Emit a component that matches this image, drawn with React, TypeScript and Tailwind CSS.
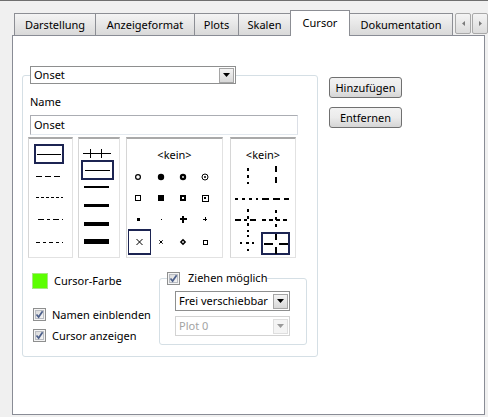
import React from "react";

const NAVY = "#1c2452";

function CheckBox() {
  return (
    <svg width="13" height="13" viewBox="0 0 13 13" className="shrink-0">
      <defs>
        <linearGradient id="cbg" x1="0" y1="0" x2="1" y2="1">
          <stop offset="0" stopColor="#d9d9d9" />
          <stop offset="1" stopColor="#f6f6f6" />
        </linearGradient>
      </defs>
      <rect x="0.5" y="0.5" width="12" height="12" fill="#f4f4f4" stroke="#8e8f8f" />
      <rect x="2.5" y="2.5" width="8" height="8" fill="url(#cbg)" stroke="#b9bcc2" />
      <path d="M3.5 6.5 L5.6 9 L9.6 3.2" fill="none" stroke="#4c5f8a" strokeWidth="1.7" />
    </svg>
  );
}

function Arrow({ disabled }: { disabled?: boolean }) {
  return (
    <svg width="7" height="4" viewBox="0 0 7 4">
      <path d="M0 0 H7 L3.5 4 Z" fill={disabled ? "#9a9a9a" : "#000"} />
    </svg>
  );
}

function Combo({ value, className, disabled }: { value: string; className: string; disabled?: boolean }) {
  return (
    <div
      className={`flex items-center bg-white pl-[3px] pr-[1px] border ${
        disabled ? "border-[#d3d3d3] text-[#a3a3a3]" : "border-[#8e8f8f] text-black"
      } ${className}`}
    >
      <span className="flex-1 whitespace-nowrap leading-[16px]">{value}</span>
      <div
        className={`flex h-[15px] w-[15px] shrink-0 items-center justify-center border ${
          disabled ? "border-[#dedede] bg-[#f4f4f4]" : "border-[#a5a5a5] bg-linear-to-b from-[#f4f4f4] to-[#d8d8d8]"
        }`}
      >
        <Arrow disabled={disabled} />
      </div>
    </div>
  );
}

function ListBox({ className, children }: { className: string; children: React.ReactNode }) {
  return (
    <div
      className={`flex flex-col bg-white border border-[#e2e2e2] border-l-[#d6d6d6] border-t-2 border-t-[#a9a9a9] ${className}`}
    >
      {children}
    </div>
  );
}

function LineStyles() {
  return (
    <svg width="43" height="118" viewBox="0 0 43 118" shapeRendering="crispEdges">
      <rect x="6" y="6" width="28" height="18" fill="none" stroke={NAVY} strokeWidth="1.6" />
      <line x1="8" y1="15.5" x2="32" y2="15.5" stroke="#000" />
      <line x1="7" y1="37.5" x2="34" y2="37.5" stroke="#000" strokeDasharray="6 3" />
      <line x1="7" y1="58.5" x2="34" y2="58.5" stroke="#000" strokeDasharray="3 2" />
      <line x1="9" y1="80.5" x2="34" y2="80.5" stroke="#000" strokeDasharray="6 3 3 3" />
      <line x1="7" y1="103.5" x2="34" y2="103.5" stroke="#000" strokeDasharray="4 3 3 3" />
    </svg>
  );
}

function LineWidths() {
  return (
    <svg width="40" height="118" viewBox="0 0 40 118" shapeRendering="crispEdges">
      <line x1="4" y1="14.5" x2="32" y2="14.5" stroke="#000" />
      <line x1="11.5" y1="10" x2="11.5" y2="19" stroke="#000" />
      <line x1="22.5" y1="10" x2="22.5" y2="19" stroke="#000" />
      <rect x="3" y="22" width="31" height="18" fill="none" stroke={NAVY} strokeWidth="1.6" />
      <line x1="6" y1="31.5" x2="31" y2="31.5" stroke="#000" />
      <rect x="5" y="47" width="25" height="2" fill="#000" />
      <rect x="5" y="65" width="25" height="3" fill="#000" />
      <rect x="5" y="83" width="25" height="4" fill="#000" />
      <rect x="5" y="100" width="25" height="5" fill="#000" />
    </svg>
  );
}

function Markers() {
  const c = [11, 34, 56, 78];
  const r = [14, 35, 56, 79];
  return (
    <svg width="95" height="94" viewBox="0 0 95 94">
      <circle cx={c[0]} cy={r[0]} r="2.4" fill="none" stroke="#000" strokeWidth="1.2" />
      <circle cx={c[1]} cy={r[0]} r="3.2" fill="#000" />
      <circle cx={c[2]} cy={r[0]} r="3.2" fill="#000" />
      <circle cx={c[2]} cy={r[0]} r="0.9" fill="#fff" />
      <circle cx={c[3]} cy={r[0]} r="3" fill="none" stroke="#000" strokeWidth="1" />
      <circle cx={c[3]} cy={r[0]} r="1" fill="#000" />
      <g shapeRendering="crispEdges">
        <rect x={c[0] - 2.5} y={r[1] - 2.5} width="5" height="5" fill="none" stroke="#000" strokeWidth="1.2" />
        <rect x={c[1] - 3} y={r[1] - 3} width="6" height="6" fill="#000" />
        <rect x={c[2] - 3} y={r[1] - 3} width="6" height="6" fill="#000" />
        <rect x={c[2] - 1} y={r[1] - 1} width="2" height="2" fill="#fff" />
        <rect x={c[3] - 3} y={r[1] - 3} width="6" height="6" fill="none" stroke="#000" strokeWidth="1" />
        <rect x={c[3] - 1} y={r[1] - 1} width="2" height="2" fill="#000" />
        <rect x={c[0] - 1.5} y={r[2] - 1.5} width="3" height="3" fill="#000" />
        <rect x={c[1] - 0.5} y={r[2] - 0.5} width="1" height="1" fill="#000" />
        <rect x={c[2] - 3.5} y={r[2] - 0.6} width="7" height="1.2" fill="#000" />
        <rect x={c[2] - 0.6} y={r[2] - 3.5} width="1.2" height="7" fill="#000" />
        <rect x={c[3] - 2} y={r[2] - 0.5} width="4" height="1" fill="#000" />
        <rect x={c[3] - 0.5} y={r[2] - 2} width="1" height="4" fill="#000" />
        <rect x="1.5" y="67" width="22" height="24" fill="none" stroke={NAVY} strokeWidth="1.6" />
      </g>
      <path d={`M9.5 ${r[3] - 3} l6 6 M15.5 ${r[3] - 3} l-6 6`} stroke="#000" strokeWidth="1" />
      <path d={`M${c[1] - 1.7} ${r[3] - 1.7} l3.4 3.4 M${c[1] + 1.7} ${r[3] - 1.7} l-3.4 3.4`} stroke="#000" strokeWidth="1" />
      <path d={`M${c[2]} ${r[3] - 3.2} l3.2 3.2 l-3.2 3.2 l-3.2 -3.2 Z`} fill="#000" />
      <rect x={c[2] - 0.8} y={r[3] - 0.8} width="1.6" height="1.6" fill="#fff" />
      <rect x={c[3] - 2} y={r[3] - 2} width="4" height="4" fill="none" stroke="#000" strokeWidth="1" shapeRendering="crispEdges" />
    </svg>
  );
}

function CursorStyles() {
  return (
    <svg width="64" height="94" viewBox="0 0 64 94" shapeRendering="crispEdges">
      <line x1="17" y1="5" x2="17" y2="21" stroke="#000" strokeWidth="2" strokeDasharray="3 4" />
      <line x1="45" y1="3" x2="45" y2="23" stroke="#000" strokeWidth="2" strokeDasharray="6 5" />
      <line x1="4" y1="36" x2="27" y2="36" stroke="#000" strokeWidth="2" strokeDasharray="3 4" />
      <line x1="31" y1="36" x2="58" y2="36" stroke="#000" strokeWidth="2" strokeDasharray="7 4" />
      <line x1="4" y1="57" x2="28" y2="57" stroke="#000" strokeWidth="2" strokeDasharray="6 3 3 3" />
      <line x1="17" y1="46" x2="17" y2="69" stroke="#000" strokeWidth="2" strokeDasharray="3 4" />
      <line x1="31" y1="57" x2="57" y2="57" stroke="#000" strokeWidth="2" strokeDasharray="4 3" />
      <line x1="45" y1="47" x2="45" y2="68" stroke="#000" strokeWidth="2" strokeDasharray="3 4" />
      <line x1="9" y1="80" x2="26" y2="80" stroke="#000" strokeWidth="2" strokeDasharray="2 4" />
      <line x1="17" y1="72" x2="17" y2="89" stroke="#000" strokeWidth="2" strokeDasharray="2 5" />
      <rect x="31" y="70" width="27" height="21" fill="none" stroke={NAVY} strokeWidth="1.6" />
      <line x1="33" y1="80.5" x2="42" y2="80.5" stroke="#000" strokeWidth="2" />
      <line x1="48" y1="80.5" x2="57" y2="80.5" stroke="#000" strokeWidth="2" />
      <line x1="45" y1="71" x2="45" y2="77" stroke="#000" strokeWidth="2" />
      <line x1="45" y1="84" x2="45" y2="91" stroke="#000" strokeWidth="2" />
    </svg>
  );
}

const tabs = [
  { label: "Darstellung", w: "w-[82px]" },
  { label: "Anzeigeformat", w: "w-[100px]" },
  { label: "Plots", w: "w-[45px]" },
  { label: "Skalen", w: "w-[53px]" },
  { label: "Cursor", w: "w-[60px]", active: true },
  { label: "Dokumentation", w: "w-[104px]" },
];

export default function App() {
  return (
    <div className="h-[417px] w-[488px] overflow-hidden border-t border-[#6f6f6f] bg-[#f0f0f0] font-['Noto_Sans','DejaVu_Sans',sans-serif] text-[11px] text-black">
      {/* tab strip */}
      <div className="mt-[9px] flex h-[25px] items-end pl-[14px]">
        {tabs.map((t, i) =>
          t.active ? (
            <div
              key={t.label}
              className={`relative z-10 -mb-px -ml-px flex h-[26px] justify-center border border-b-0 border-[#8c8e94] bg-white pt-[4px] leading-[16px] ${t.w}`}
            >
              {t.label}
            </div>
          ) : (
            <div
              key={t.label}
              className={`flex h-[22px] items-center justify-center border border-b-0 border-[#8c8e94] bg-linear-to-b from-[#f4f4f4] to-[#d9d9d9] leading-[16px] ${
                i === 0 ? "" : "-ml-px"
              } ${t.w}`}
            >
              {t.label}
            </div>
          )
        )}
        <div className="mb-px ml-[2px] flex h-[21px] gap-[1px]">
          <div className="flex w-[16px] items-center justify-center rounded-[2px] border border-[#a9a9a9] bg-linear-to-b from-[#f4f4f4] to-[#dcdcdc]">
            <svg width="3" height="5" viewBox="0 0 3 5">
              <path d="M3 0 V5 L0 2.5 Z" fill="#7b7b7b" />
            </svg>
          </div>
          <div className="flex w-[16px] items-center justify-center rounded-[2px] border border-[#a9a9a9] bg-linear-to-b from-[#f4f4f4] to-[#dcdcdc]">
            <svg width="3" height="5" viewBox="0 0 3 5">
              <path d="M0 0 V5 L3 2.5 Z" fill="#7b7b7b" />
            </svg>
          </div>
        </div>
      </div>

      {/* tab page */}
      <div className="ml-[12px] flex h-[380px] w-[473px] items-start border border-[#898c95] bg-white">
        <fieldset className="ml-[9px] mt-[30px] w-[296px] rounded-[3px] border border-[#d5dfe5] px-[7px] pb-[10px]">
          <legend>
            <Combo value="Onset" className="h-[18px] w-[206px]" />
          </legend>

          <div className="mt-[10px] leading-[16px]">Name</div>
          <div className="mt-[5px] flex h-[20px] w-[268px] items-center border border-[#abadb3] border-b-[#e3e9ef] border-r-[#dbdfe6] pl-[3px]">
            Onset
          </div>

          <div className="-ml-[2px] mt-[2px] flex">
            <ListBox className="h-[121px] w-[45px]">
              <LineStyles />
            </ListBox>
            <ListBox className="ml-[5px] h-[121px] w-[42px]">
              <LineWidths />
            </ListBox>
            <ListBox className="ml-[6px] h-[121px] w-[97px]">
              <div className="pt-[8px] text-center leading-[16px]">&lt;kein&gt;</div>
              <Markers />
            </ListBox>
            <ListBox className="ml-[7px] h-[121px] w-[66px]">
              <div className="pt-[8px] text-center leading-[16px]">&lt;kein&gt;</div>
              <CursorStyles />
            </ListBox>
          </div>

          <div className="mt-[12px] flex items-start">
            <div className="w-[129px] whitespace-nowrap">
              <div className="ml-[2px] mt-[3px] flex items-center gap-[6px]">
                <div className="h-[16px] w-[16px] border border-[#a6e87e] bg-[#5cff00]" />
                <span className="leading-[16px]">Cursor-Farbe</span>
              </div>
              <div className="ml-[3px] mt-[15px] flex h-[21px] items-center gap-[6px]">
                <CheckBox />
                <span className="leading-[16px]">Namen einblenden</span>
              </div>
              <div className="ml-[3px] flex h-[21px] items-center gap-[6px]">
                <CheckBox />
                <span className="leading-[16px]">Cursor anzeigen</span>
              </div>
            </div>

            <fieldset className="w-[148px] rounded-[3px] border border-[#d5dfe5] px-[7px] pb-[8px]">
              <legend className="flex h-[16px] items-center gap-[8px] whitespace-nowrap">
                <CheckBox />
                <span className="leading-[16px]">Ziehen möglich</span>
              </legend>
              <Combo value="Frei verschiebbar" className="ml-[8px] mt-[5px] h-[20px] w-[115px]" />
              <Combo value="Plot 0" disabled className="ml-[8px] mt-[5px] h-[20px] w-[115px]" />
            </fieldset>
          </div>
        </fieldset>

        <div className="ml-[11px] mt-[41px] flex flex-col gap-[9px]">
          <button className="h-[21px] w-[73px] rounded-[3px] border border-[#707070] bg-linear-to-b from-[#f2f2f2] via-[#ebebeb] to-[#d5d5d5] leading-[16px]">
            Hinzufügen
          </button>
          <button className="h-[21px] w-[73px] rounded-[3px] border border-[#707070] bg-linear-to-b from-[#f2f2f2] via-[#ebebeb] to-[#d5d5d5] leading-[16px]">
            Entfernen
          </button>
        </div>
      </div>
    </div>
  );
}
